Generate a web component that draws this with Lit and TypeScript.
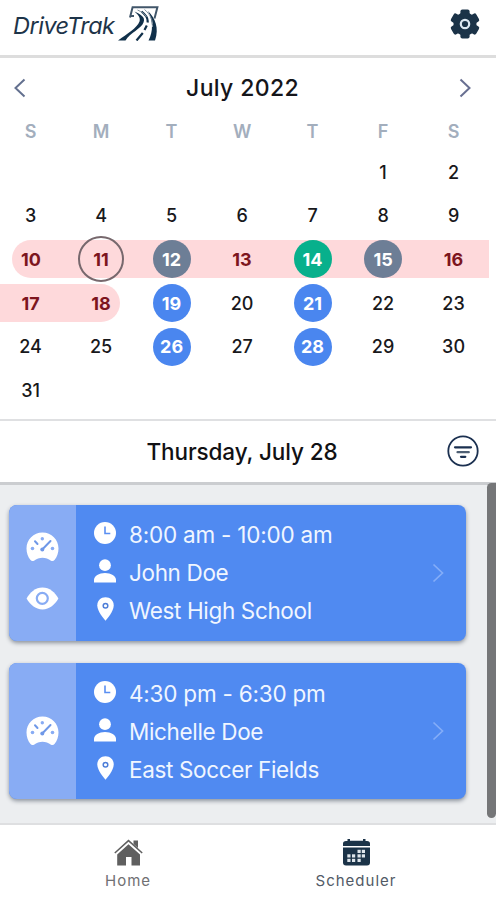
import { LitElement, html, css, svg, nothing } from "lit";
import { customElement } from "lit/decorators.js";
import { classMap } from "lit/directives/class-map.js";

const icons = {
  logo: svg`<svg width="43" height="36" viewBox="0 0 43 36">
    <path d="M13 12.500 15.600 2.200H40.400L37.500 13.500M13.500 11H17" fill="none" stroke="#41566a" stroke-width="2"/>
    <path d="M1 35.500C10 29 20 23 22.500 16.500C24 12 20 9 17.500 6.500C23 9 29 12 26.500 17.500C24.500 23.500 13 28 8.500 35.500Z" fill="#10304a"/>
    <path d="M31 6C38 13 42.500 23 38 35.500H31.500C36.500 26 36 16 31 6Z" fill="#10304a"/>
    <path d="M24.500 6.500C29 10 31.500 13 30.500 17.500M29.800 20.500 27.500 25M25.800 28 19.500 35.500" fill="none" stroke="#10304a" stroke-width="2.200"/>
    <path d="M20.500 5C25 7 28 9 29.500 12M27.500 4.500C33 9 36 15 35.500 22" fill="none" stroke="#8394a2" stroke-width="1"/>
  </svg>`,
  gear: svg`<svg width="30" height="30" viewBox="-15 -15 30 30" fill="#1b3348">
    <circle r="11.500"/>
    ${[0, 60, 120].map((a) => svg`<rect x="-4.600" y="-14.600" width="9.200" height="29.200" rx="2" transform="rotate(${a})"/>`)}
    <circle r="4.200" fill="#1b3348" stroke="#dce8f2" stroke-width="2.200"/>
  </svg>`,
  prev: svg`<svg width="12" height="20" viewBox="0 0 12 20" fill="none" stroke="#63708f" stroke-width="2"><path d="M10.500 1.500 1.500 10 10.500 18.500"/></svg>`,
  next: svg`<svg width="12" height="20" viewBox="0 0 12 20" fill="none" stroke="#686f91" stroke-width="2"><path d="M1.500 1.500 10.500 10 1.500 18.500"/></svg>`,
  filter: svg`<svg width="32" height="32" viewBox="0 0 32 32" fill="none" stroke="#1b3050"><circle cx="16" cy="16" r="14.700" stroke-width="1.800"/><path d="M8 12.300H24" stroke-width="2.200" stroke-linecap="round"/><path d="M10.500 17.200H21.800" stroke="#4e5f73" stroke-width="2.200" stroke-linecap="round"/><path d="M14 21.800H18.300" stroke-width="2.200" stroke-linecap="round"/></svg>`,
  gauge: svg`<svg width="33" height="30" viewBox="0 0 33 30"><path d="M16.500.500C7.500.500.500 7.500.500 16.500C.500 21 2 25 4.300 27.700C5.300 29 6.500 29.300 8 28.700C13 24.800 20 24.800 25 28.700C26.500 29.300 27.700 29 28.700 27.700C31 25 32.500 21 32.500 16.500C32.500 7.500 25.500.500 16.500.500Z" fill="#fff"/><g fill="#88acf4"><circle cx="16.300" cy="6.800" r="1.700"/><circle cx="6.500" cy="16.500" r="1.800"/><circle cx="26.500" cy="16.500" r="1.800"/></g><path d="M9 9.300 11.500 12M16 17.800 24.500 9" stroke="#6f98e8" stroke-width="2" stroke-linecap="round"/><circle cx="16.300" cy="17.500" r="2" fill="#6f98e8"/></svg>`,
  eye: svg`<svg width="33" height="23" viewBox="0 0 33 23"><path d="M.600 11.500C4 5.500 9.500.600 16.500.600S29 5.500 32.400 11.500C29 17.500 23.500 22.400 16.500 22.400S4 17.500.600 11.500Z" fill="#fff"/><circle cx="16.300" cy="11.300" r="5.500" fill="#fff" stroke="#88acf4" stroke-width="2.200"/></svg>`,
  clock: svg`<svg width="22" height="22" viewBox="0 0 22 22"><circle cx="11" cy="11" r="11" fill="#fff"/><path d="M11 4.500V11.500H16.300" fill="none" stroke="#5a8ff2" stroke-width="1.600"/></svg>`,
  person: svg`<svg width="22" height="24" viewBox="0 0 22 24" fill="#fff"><circle cx="11" cy="6.200" r="5.900"/><path d="M0 23.500V21C0 17 5 14 11 14S22 17 22 21V23.500Z"/></svg>`,
  pin: svg`<svg width="17" height="24" viewBox="0 0 17 24"><path d="M8.500.300C3.800.300.300 3.800.300 8.300C.300 12.500 3.500 18 8.500 23.700C13.500 18 16.700 12.500 16.700 8.300C16.700 3.800 13.200.300 8.500.300Z" fill="#fff"/><circle cx="8.500" cy="8.700" r="2.300" fill="#fff" stroke="#4e7ed8" stroke-width="1.500"/></svg>`,
  open: svg`<svg width="12" height="20" viewBox="0 0 12 20" fill="none" stroke="#84adf8" stroke-width="1.700"><path d="M1.500 1.500 10.500 10 1.500 18.500"/></svg>`,
  home: svg`<svg width="29" height="28" viewBox="0 0 29 28" fill="#5f5f5f"><path d="M19.500 1.500H24V9L19.500 5Z"/><path d="M3.200 15.500 14.500 5.300 26 15.500V26.500H17.500V18H12V26.500H3.200Z"/><path d="M.800 14 14.500 1.600 28.200 14" fill="none" stroke="#5f5f5f" stroke-width="1.500"/></svg>`,
  calendar: svg`<svg width="27" height="27" viewBox="0 0 27 27"><path d="M0 7V4.500Q0 2 3 2H4.500V0H7V1.700H20V0H22.500V2H24Q27 2 27 4.500V7Z" fill="#1b3348"/><path d="M0 8.500H27V23.500Q27 26.500 24 26.500H3Q0 26.500 0 23.500Z" fill="#1b3348"/><g fill="#dfe6ec">${[
    [14.5, 10.8], [18.8, 10.8], [4.3, 15.3], [9, 15.3], [14.5, 15.3], [18.8, 15.3], [4.3, 19.8], [9, 19.8], [14.5, 19.8],
  ].map(([x, y]) => svg`<rect x=${x} y=${y} width="3.200" height="3.200"/>`)}</g></svg>`,
};

const marks: Record<number, string> = { 11: "today", 12: "slate", 14: "green", 15: "slate", 19: "blue", 21: "blue", 26: "blue", 28: "blue" };

@customElement("month-calendar")
class MonthCalendar extends LitElement {
  static styles = css`
    :host { display: block; height: 361px; overflow: hidden; border-bottom: 2px solid #dfe0e2; }
    .title { display: flex; justify-content: space-between; align-items: center; height: 60px; padding: 0 25px 0 14px; font-size: 23px; font-weight: 470; color: #15151a; }
    .title svg { display: block; }
    .label { letter-spacing: 0.35px; }
    .grid { display: grid; grid-template-columns: repeat(7, 70.5px); margin-left: -4.7px; }
    .head { grid-auto-rows: 26px; font-size: 18px; font-weight: 600; color: #a3aebd; }
    .days { grid-auto-rows: 43.6px; margin-top: 6.5px; font-size: 18px; font-weight: 480; color: #18181b; }
    .cell { display: grid; place-items: center; }
    .day { display: grid; place-items: center; height: 38px; width: 100%; align-self: center; }
    .off { background: #fed9db; color: #7d151e; font-weight: 680; }
    .first { width: 53.8px; justify-self: end; border-radius: 19px 0 0 19px; }
    .first .num { margin-right: 17px; }
    .last { width: 54.5px; justify-self: start; border-radius: 0 19px 19px 0; }
    .last .num { margin-left: 16px; }
    .num { display: grid; place-items: center; width: 38px; height: 38px; border-radius: 50%; }
    .slate, .green, .blue { color: #fff; font-weight: 700; }
    .slate { background: #6d7e96; }
    .green { background: #08b08c; }
    .blue { background: #4a86ef; }
    .today { width: 42px; height: 42px; margin: -4px 0; border: 2px solid #77686d; }
  `;
  render() {
    return html`
      <div class="title">${icons.prev}<span class="label">July 2022</span>${icons.next}</div>
      <div class="grid head">${["S", "M", "T", "W", "T", "F", "S"].map((d) => html`<div class="cell">${d}</div>`)}</div>
      <div class="grid days">
        ${Array.from({ length: 36 }, (_, i) => {
          const n = i - 4;
          if (n < 1) return html`<div class="cell"></div>`;
          const off = n >= 10 && n <= 18;
          return html`<div class="cell"><div class=${classMap({ day: true, off, first: n === 10, last: n === 18 })}><span class="num ${marks[n] ?? ""}">${n}</span></div></div>`;
        })}
      </div>`;
  }
}

@customElement("lesson-card")
class LessonCard extends LitElement {
  static properties = { time: {}, who: {}, place: {}, watched: { type: Boolean, reflect: true } };
  declare time: string;
  declare who: string;
  declare place: string;
  declare watched: boolean;
  static styles = css`
    :host { display: flex; width: 457px; height: 136px; border-radius: 8px; overflow: hidden; background: #508af1; box-shadow: 0 2px 4px #8b919b; color: #f0f6ff; }
    svg { display: block; }
    .side { width: 67px; display: flex; flex-direction: column; align-items: center; justify-content: center; gap: 25px; box-sizing: border-box; background: #88acf4; }
    .info { flex: 1; display: flex; flex-direction: column; justify-content: center; padding: 1px 0 0 18px; }
    :host([watched]) .side { padding-bottom: 5px; }
    :host([watched]) .info { padding: 0 0 2px 18px; }
    .line { display: flex; align-items: center; height: 38px; font-size: 22.5px; letter-spacing: -0.35px; white-space: nowrap; }
    .time { letter-spacing: -0.22px; }
    .icon { width: 22px; margin-right: 13px; display: grid; place-items: center; margin-top: -3px; }
    :host([watched]) .icon { margin-top: -2px; }
    .more { display: grid; place-items: center; margin-right: 22px; }
  `;
  render() {
    return html`
      <div class="side">${icons.gauge}${this.watched ? icons.eye : nothing}</div>
      <div class="info">
        <div class="line time"><span class="icon">${icons.clock}</span><span>${this.time}</span></div>
        <div class="line"><span class="icon">${icons.person}</span><span>${this.who}</span></div>
        <div class="line"><span class="icon">${icons.pin}</span><span>${this.place}</span></div>
      </div>
      <div class="more">${icons.open}</div>`;
  }
}

@customElement("app-root")
class AppRoot extends LitElement {
  static styles = css`
    :host { display: flex; flex-direction: column; width: 496px; height: 900px; overflow: hidden; background: #fff; font-family: Inter, "Liberation Sans", sans-serif; }
    svg { display: block; }
    .top { box-sizing: border-box; height: 58px; border-bottom: 3px solid #dddddd; display: flex; justify-content: space-between; padding: 5px 16px 0 13px; }
    .brand { display: flex; }
    .name { width: 104px; font: oblique 450 23.5px/41px Inter, sans-serif; font-feature-settings: "cv11"; letter-spacing: -0.5px; color: #1d3449; white-space: nowrap; }
    .cog { margin-top: 4px; }
    .date { box-sizing: border-box; height: 64px; display: grid; grid-template-columns: 1fr auto 1fr; align-items: center; padding: 0 17px 0 5px; border-bottom: 3px solid #cbcdd0; font-size: 22.5px; font-weight: 550; letter-spacing: -0.1px; color: #111114; }
    .filter { justify-self: end; margin-top: -2px; }
    .datetext { margin-top: -1px; }
    .list { flex: 1; display: flex; justify-content: space-between; background: #eceef0; border-bottom: 2px solid #dedfe1; }
    .cards { display: flex; flex-direction: column; gap: 22px; padding: 20px 0 0 9px; }
    .thumb { width: 9px; height: 335px; margin-top: -2px; border-radius: 5px 0 5px 5px; background: #757678; }
    .tabs { height: 75px; display: flex; padding: 0 26px 0 14px; font-size: 15px; color: #707073; }
    .tab { flex: 1; display: flex; flex-direction: column; align-items: center; padding-top: 14px; gap: 4px; letter-spacing: 1px; }
    .active { color: #525a66; gap: 5px; }
  `;
  render() {
    return html`
      <div class="top"><div class="brand"><div class="name">DriveTrak</div>${icons.logo}</div><div class="cog">${icons.gear}</div></div>
      <month-calendar></month-calendar>
      <div class="date"><span></span><span class="datetext">Thursday, July 28</span><span class="filter">${icons.filter}</span></div>
      <div class="list">
        <div class="cards">
          <lesson-card .time=${"8:00 am - 10:00 am"} .who=${"John Doe"} .place=${"West High School"} .watched=${true}></lesson-card>
          <lesson-card .time=${"4:30 pm - 6:30 pm"} .who=${"Michelle Doe"} .place=${"East Soccer Fields"}></lesson-card>
        </div>
        <div class="thumb"></div>
      </div>
      <div class="tabs">
        <div class="tab">${icons.home}<span>Home</span></div>
        <div class="tab active">${icons.calendar}<span>Scheduler</span></div>
      </div>`;
  }
}
